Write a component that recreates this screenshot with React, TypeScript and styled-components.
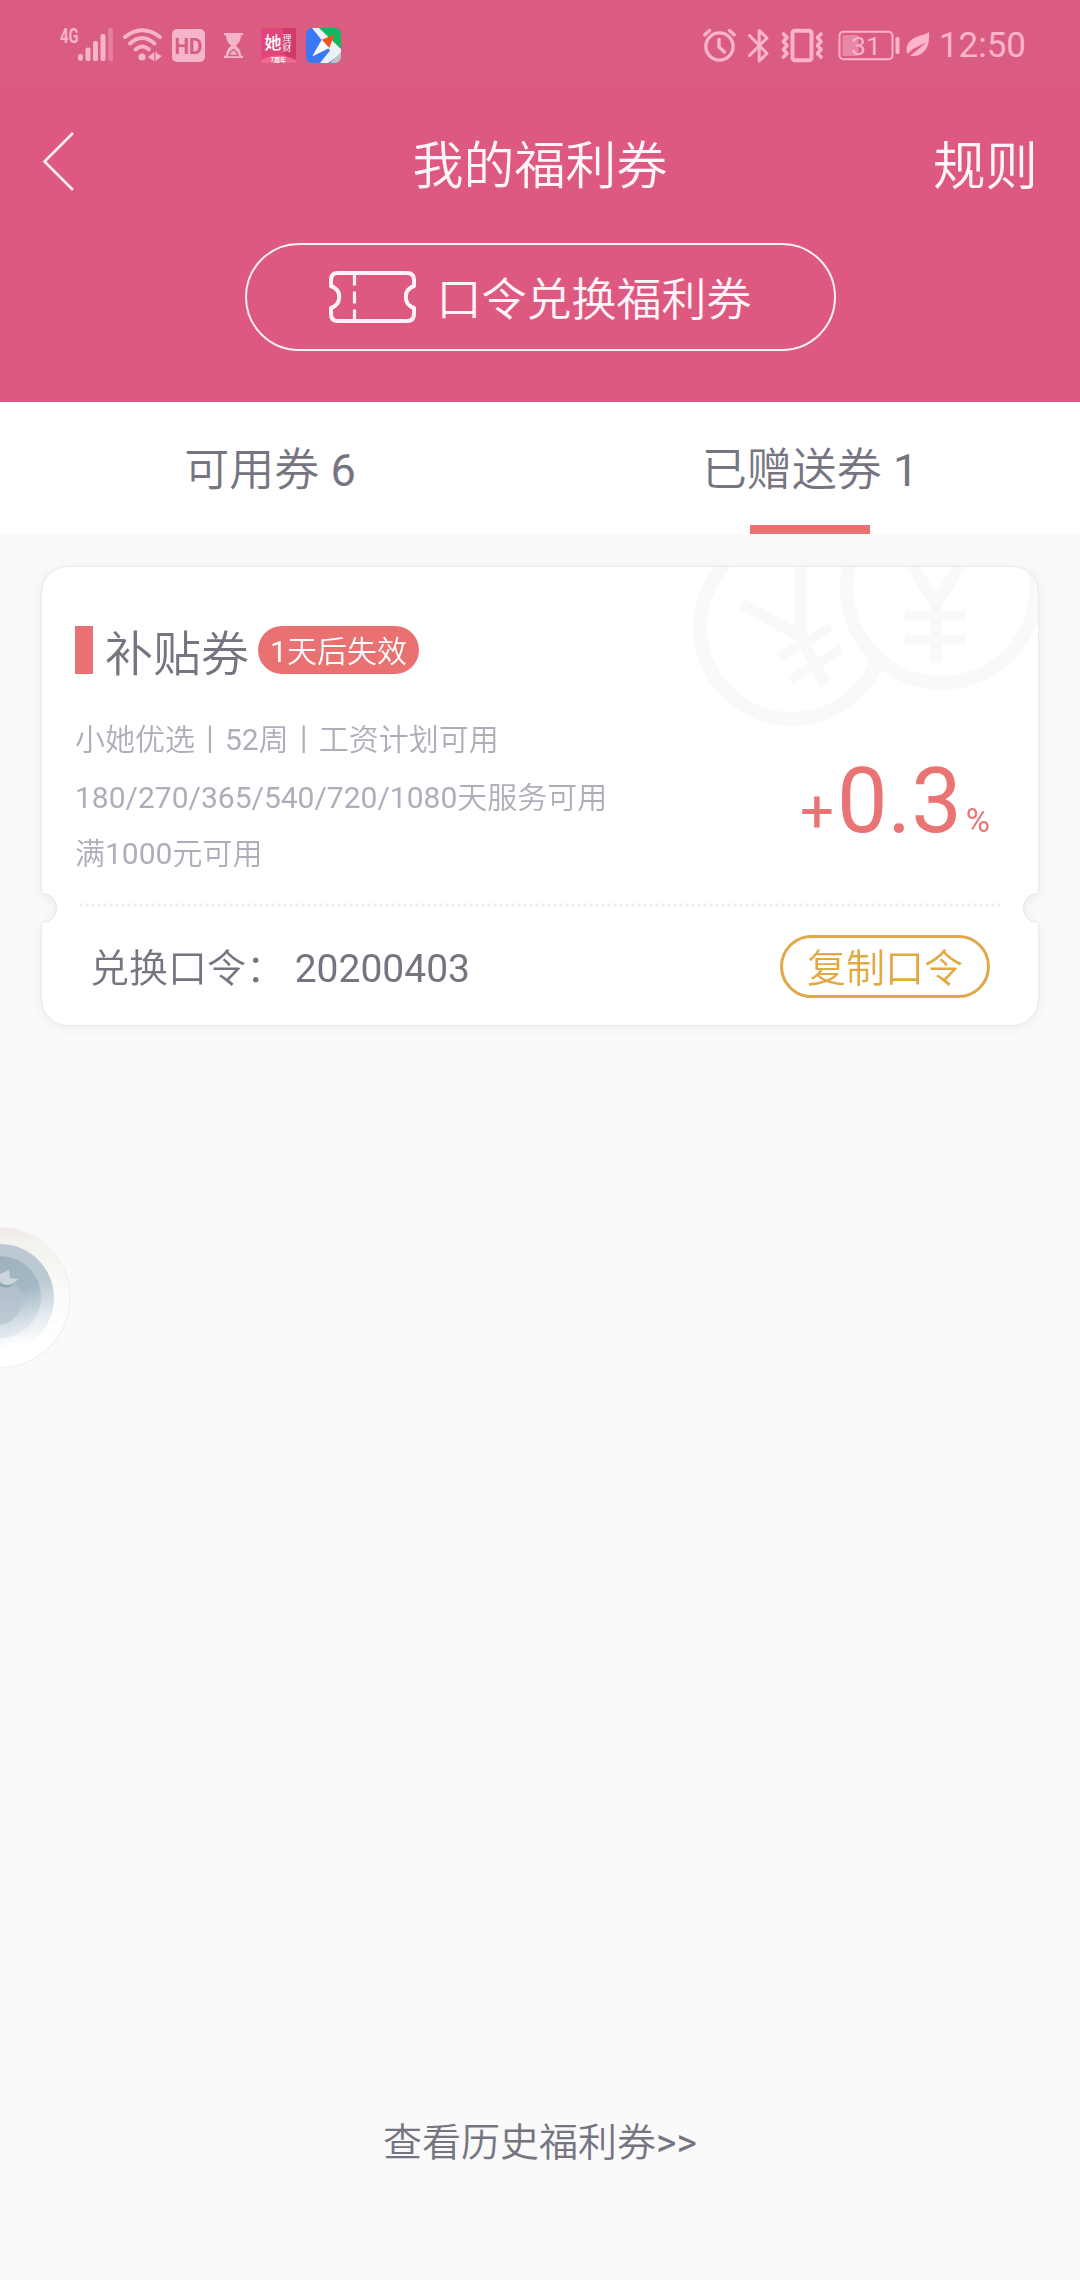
import React from 'react';
import styled, { createGlobalStyle } from 'styled-components';

const GlobalStyle = createGlobalStyle`
  * { box-sizing: border-box; }
  body {
    margin: 0;
    background: #fafafa;
    font-family: Roboto, "Noto Sans CJK SC", sans-serif;
    font-weight: 350;
    color: #757582;
  }
  button { font: inherit; color: inherit; background: none; border: 0; padding: 0; }
  svg { display: block; flex: none; }
`;

const Screen = styled.div`
  width: 1080px;
  height: 2280px;
  display: flex;
  flex-direction: column;
  position: relative;
  overflow: hidden;
  background: #fafafa;
`;

const StatusBar = styled.div`
  height: 90px;
  padding: 0 54px 0 58px;
  display: flex;
  align-items: flex-start;
  justify-content: space-between;
  background: #da5d81;
`;

const Clock = styled.span`
  margin: 25px 0 0 8px;
  font-size: 35px;
  line-height: 42px;
  font-weight: 400;
  color: #fdb3cb;
`;

const StatusRight = styled.div`
  display: flex;
`;

const Header = styled.header`
  height: 312px;
  padding-top: 4px;
  background: #de5980;
  color: #fff5fa;
`;

const NavRow = styled.div`
  height: 149px;
  padding: 0 42px;
  display: grid;
  grid-template-columns: 1fr auto 1fr;
  align-items: start;
`;

const BackButton = styled.button`
  margin-top: 36px;
  justify-self: start;
`;

const Title = styled.h1`
  margin: 41px 0 0;
  font-size: 51px;
  line-height: 64px;
  font-weight: 350;
`;

const RulesLink = styled.button`
  margin-top: 40px;
  justify-self: end;
  font-size: 52.5px;
  line-height: 66px;
`;

const RedeemButton = styled.button`
  width: 591px;
  height: 108px;
  margin: 0 auto;
  padding: 0 0 0 81px;
  display: flex;
  align-items: center;
  border: 2px solid #fff0f6;
  border-radius: 54px;
`;

const RedeemLabel = styled.span`
  margin: 7px 0 0 21px;
  font-size: 45px;
  line-height: 54px;
`;

const Tabs = styled.nav`
  height: 132px;
  display: grid;
  grid-template-columns: 1fr 1fr;
  background: #fff;
`;

const Tab = styled.button<{ $active?: boolean }>`
  display: flex;
  flex-direction: column;
  align-items: center;
  justify-content: space-between;
  padding-top: 39px;
  font-size: 45px;
  line-height: 60px;
  &::after {
    content: "";
    width: 120px;
    height: 9px;
    background: ${p => (p.$active ? '#ea7171' : 'transparent')};
  }
`;

const Latin = styled.span`
  font-weight: 400;
`;

const Content = styled.main`
  flex: 1;
  display: flex;
  flex-direction: column;
  padding: 33px 42px 0;
`;

const CardShadow = styled.div`
  filter: drop-shadow(0 0 1px rgba(0, 0, 0, 0.13)) drop-shadow(0 2px 7px rgba(0, 0, 0, 0.055));
`;

const Card = styled.article`
  height: 458px;
  position: relative;
  border-radius: 25px;
  background: #fff;
  overflow: hidden;
  mask-image: radial-gradient(circle at 0 341px, transparent 14.5px, #000 15.5px),
    radial-gradient(circle at 100% 341px, transparent 14.5px, #000 15.5px);
  mask-composite: intersect;
`;

const Watermark = styled.svg`
  position: absolute;
  right: 0;
  top: 0;
`;

const CardBody = styled.div`
  position: relative;
  height: 336px;
  padding: 59px 48px 0 33px;
`;

const CardHead = styled.div`
  display: flex;
  align-items: center;
  height: 48px;
`;

const Marker = styled.span`
  width: 18px;
  height: 48px;
  background: #ea7171;
`;

const CardTitle = styled.h2`
  margin: 9px 9px 0 12px;
  font-size: 48px;
  line-height: 48px;
  font-weight: 350;
`;

const Tag = styled.span`
  height: 48px;
  padding: 2px 12px 0;
  border-radius: 24px;
  background: #ea7171;
  color: #fff;
  font-size: 30px;
  line-height: 48px;
`;

const Details = styled.div`
  display: flex;
  justify-content: space-between;
`;

const Terms = styled.div`
  padding-top: 36px;
  font-size: 30px;
  color: #aeaeba;
`;

const Term = styled.p<{ $height: number }>`
  margin: 0;
  line-height: 60px;
  height: ${p => p.$height}px;
  white-space: nowrap;
`;

const Rate = styled.div`
  display: flex;
  align-items: baseline;
  padding-top: 75px;
  color: #ea7373;
  font-weight: 400;
`;

const RatePart = styled.span<{ $size: number; $gap?: number }>`
  font-size: ${p => p.$size}px;
  line-height: 106px;
  margin-left: ${p => p.$gap || 0}px;
`;

const Divider = styled.svg`
  margin-left: 36px;
`;

const CardFoot = styled.div`
  display: flex;
  align-items: flex-start;
  justify-content: space-between;
  padding: 28px 48px 0;
`;

const Code = styled.span`
  margin-top: 4px;
  font-size: 39px;
  line-height: 60px;
  white-space: pre;
`;

const CopyButton = styled.button`
  width: 210px;
  height: 63px;
  border: 3px solid #dfa848;
  border-radius: 32px;
  color: #e2a941;
  font-size: 39px;
  line-height: 63px;
`;

const HistoryLink = styled.button`
  margin: auto auto 107px;
  font-size: 39px;
  line-height: 60px;
`;

const FloatingOrb = styled.button`
  position: absolute;
  left: 0;
  top: 1225px;
`;

const StatusIconsLeft = () => (
  <svg width="290" height="90" viewBox="58 0 290 90">
    <g fill="#f4b5ca">
      <text x="60" y="42.500" fontFamily="Roboto" fontWeight="700" fontSize="20" textLength="18.500" lengthAdjust="spacingAndGlyphs">4G</text>
      <rect x="78" y="54" width="5" height="7" rx="2.400" />
      <rect x="85.500" y="47.500" width="5" height="13.500" rx="2" />
      <rect x="93" y="41" width="5" height="20" rx="2" />
      <rect x="100.500" y="34" width="5" height="27" rx="2" />
      <rect x="108.300" y="28" width="4.600" height="33" rx="1.500" opacity="0.400" />
      <circle cx="142" cy="57" r="3.600" />
      <path d="M148 57l6.200-5v9.200zM155.400 51.200v10l6.500-5.200-3.300-1.400z" />
      <rect x="172" y="29" width="33" height="33" rx="5" />
      <path d="M224 33h19v2.200h-2c0 5.500-2.600 8-5.200 10.500 2.800 2.300 5.200 5 5.200 10h2V58h-19v-2.300h2c0-5 2.400-7.700 5.200-10-2.600-2.500-5.200-5-5.200-10.500h-2z" />
    </g>
    <path d="M229 55.500c0-2 2-4 4.500-6 2.500 2 4.500 4 4.500 6z" fill="none" stroke="#da5d81" strokeWidth="1.500" />
    <g fill="none" stroke="#f4b5ca" strokeWidth="3.800" strokeLinecap="round">
      <path d="M125 37Q142.300 23.500 160 37M130 43.500Q142.300 32.500 154.500 43.500M135.500 49.500Q142.300 43.500 149 49.500" />
    </g>
    <text x="174.500" y="53.500" fontFamily="Roboto" fontWeight="700" fontSize="22" fill="#da5d81" textLength="28" lengthAdjust="spacingAndGlyphs">HD</text>
    <rect x="261" y="28" width="35" height="35" fill="#e2457b" />
    <path d="M283 28h13v35l-13-10z" fill="#cf3a6c" />
    <path d="M261 60Q278 51 296 60v3h-35z" fill="#f2668f" />
    <g fill="#fff" fontFamily="Noto Sans CJK SC">
      <text x="264.500" y="49" fontSize="17" fontWeight="500">她</text>
      <text x="282.500" y="42" fontSize="9">理</text>
      <text x="282.500" y="51" fontSize="9">财</text>
      <text x="270.500" y="62" fontSize="6" fontWeight="700">7周年</text>
    </g>
    <clipPath id="mapClip"><rect x="306" y="28" width="35" height="35" rx="6" /></clipPath>
    <g clipPath="url(#mapClip)">
      <rect x="306" y="28" width="35" height="35" fill="#3b78f8" />
      <path d="M318 28h23v24z" fill="#13b75c" />
      <path d="M312 28h7l22 21v5l-13 9h-8l10-12.500z" fill="#edf0f6" />
      <path d="M330 63l11-11v11z" fill="#bfc3c6" />
      <path d="M334.500 34.500l-12.800 5.200 7.500 8.300z" fill="#f4511e" />
      <path d="M321.700 39.700l7.500 8.300-17 8.500z" fill="#fff" />
    </g>
  </svg>
);

const StatusIconsRight = () => (
  <svg width="230" height="90" viewBox="701 0 230 90">
    <g fill="none" stroke="#fdb3cb" strokeWidth="3.400" strokeLinecap="round" strokeLinejoin="round">
      <circle cx="719.500" cy="46.500" r="13.600" />
      <path d="M719 39.500v7.500l5.500 5M704.800 34.800l4.800-4.300M734.200 34.800l-4.800-4.300" />
      <path d="M749.500 35.500L767 53.500l-7.800 7.500V30.500l7.800 7.500-17.500 17.500" strokeWidth="3" />
      <rect x="792.500" y="30.700" width="19" height="29.600" rx="2.500" strokeWidth="4" />
      <path d="M783.500 34l3.500 3.500-3.500 4 3.500 4-3.500 4 3.500 4-3.500 3.500M821 34l-3.500 3.500 3.500 4-3.500 4 3.500 4-3.500 4 3.500 3.500" strokeWidth="3.600" />
      <rect x="839.500" y="31.800" width="53" height="27.400" rx="4" strokeWidth="2" />
    </g>
    <rect x="842.500" y="35" width="16" height="21" rx="1.500" fill="#e887a7" />
    <rect x="895.500" y="37" width="4" height="17" rx="1.500" fill="#fdb3cb" />
    <text x="851" y="54.500" fontFamily="Roboto" fontWeight="400" fontSize="26.500" fill="#fdb3cb">31</text>
    <path d="M929 32c1 11-2 18-8 22-4 2.500-8 2-11 2l6-5 11-9-14 7-5.500 5c-3-7 1-14 9-17 5-2 8-2 12.500-5z" fill="#fdb3cb" />
  </svg>
);

const TicketIcon = () => (
  <svg width="88" height="56" viewBox="0 0 88 56" fill="none" stroke="#fff2f8" strokeWidth="4">
    <path d="M10 4h69q7 0 7 7v6c-11 4-11 18 0 22v6q0 7-7 7H10q-7 0-7-7v-6c11-4 11-18 0-22v-6q0-7 7-7z" strokeLinejoin="round" />
    <path d="M26.500 5v11.500M26.500 22.500v12M26.500 40.500v11" strokeWidth="3.200" />
  </svg>
);

const Orb = () => (
  <svg width="80" height="150" viewBox="0 1225 80 150">
    <defs>
      <linearGradient id="rim" x1="0" y1="0" x2="0" y2="1">
        <stop offset="0" stopColor="#f0e9ed" />
        <stop offset="0.120" stopColor="#f3f3ec" />
        <stop offset="0.500" stopColor="#fcfbfc" />
        <stop offset="0.800" stopColor="#ffffff" />
      </linearGradient>
      <linearGradient id="bowl" x1="0.500" y1="0" x2="0.650" y2="1">
        <stop offset="0" stopColor="#bcc8d3" />
        <stop offset="0.400" stopColor="#bccad3" />
        <stop offset="0.700" stopColor="#e3eaee" />
        <stop offset="0.950" stopColor="#ffffff" />
      </linearGradient>
      <linearGradient id="lens" x1="0.450" y1="0" x2="0.700" y2="1">
        <stop offset="0" stopColor="#9fb1be" />
        <stop offset="0.450" stopColor="#a3b8c4" />
        <stop offset="0.850" stopColor="#d8e2e8" />
        <stop offset="1" stopColor="#e6edf1" />
      </linearGradient>
      <linearGradient id="fruit" x1="0" y1="0" x2="0" y2="1">
        <stop offset="0" stopColor="#adbbc8" />
        <stop offset="1" stopColor="#bfcad5" />
      </linearGradient>
    </defs>
    <circle cx="0" cy="1297.500" r="70" fill="url(#rim)" stroke="#f5eff4" strokeWidth="1.500" />
    <circle cx="0" cy="1298" r="54" fill="url(#bowl)" />
    <circle cx="0" cy="1297" r="41" fill="url(#lens)" />
    <circle cx="-3" cy="1300" r="25" fill="url(#fruit)" />
    <path d="M-2 1283q10 8 18-4" fill="none" stroke="#8fa5b2" strokeWidth="2.500" />
    <path d="M0 1274l9-4 1 8 8 1q-5 6-10 6-5 0-8-4z" fill="#ccd6de" />
    <path d="M24 1335q9-6 14-15" fill="none" stroke="#eef3f6" strokeWidth="1.500" />
  </svg>
);

export default function App() {
  return (
    <Screen>
      <GlobalStyle />
      <StatusBar>
        <StatusIconsLeft />
        <StatusRight>
          <StatusIconsRight />
          <Clock>12:50</Clock>
        </StatusRight>
      </StatusBar>
      <Header>
        <NavRow>
          <BackButton aria-label="返回">
            <svg width="34" height="64" viewBox="0 0 34 64" fill="none" stroke="#fff0f6" strokeWidth="2.600">
              <path d="M31 3L2.500 31.500 31 60" />
            </svg>
          </BackButton>
          <Title>我的福利券</Title>
          <RulesLink>规则</RulesLink>
        </NavRow>
        <RedeemButton>
          <TicketIcon />
          <RedeemLabel>口令兑换福利券</RedeemLabel>
        </RedeemButton>
      </Header>
      <Tabs>
        <Tab><span>可用券<Latin> 6</Latin></span></Tab>
        <Tab $active><span>已赠送券<Latin> 1</Latin></span></Tab>
      </Tabs>
      <Content>
        <CardShadow>
          <Card>
            <Watermark width="360" height="170" viewBox="678 567 360 170" fill="none" stroke="#f9f9f9">
              <circle cx="792" cy="627" r="92" strokeWidth="14" />
              <path d="M741 603.500l61 33.500M801 567v70l24 47" strokeWidth="12" />
              <path d="M779 658l52-31M790 680l52-31" strokeWidth="9.500" />
              <circle cx="941.500" cy="588" r="95" fill="#fff" strokeWidth="14" />
              <path d="M909 560l27 44v59M963 560l-27 44" strokeWidth="12" />
              <path d="M905 615.500h61M905 639.500h61" strokeWidth="9.500" />
            </Watermark>
            <CardBody>
              <CardHead>
                <Marker />
                <CardTitle>补贴券</CardTitle>
                <Tag><Latin>1</Latin>天后失效</Tag>
              </CardHead>
              <Details>
                <Terms>
                  <Term $height={58}>小她优选丨<Latin>52</Latin>周丨工资计划可用</Term>
                  <Term $height={56}><Latin>180/270/365/540/720/1080</Latin>天服务可用</Term>
                  <Term $height={60}>满<Latin>1000</Latin>元可用</Term>
                </Terms>
                <Rate>
                  <RatePart $size={60}>+</RatePart>
                  <RatePart $size={90} $gap={3}>0.3</RatePart>
                  <RatePart $size={33} $gap={4}>%</RatePart>
                </Rate>
              </Details>
            </CardBody>
            <Divider width="924" height="4" viewBox="0 0 924 4">
              <path d="M1.500 2h922" stroke="#eeeeee" strokeWidth="3" strokeDasharray="3 3" />
            </Divider>
            <CardFoot>
              <Code>兑换口令：<Latin> 20200403</Latin></Code>
              <CopyButton>复制口令</CopyButton>
            </CardFoot>
          </Card>
        </CardShadow>
        <HistoryLink>查看历史福利券<Latin>&gt;&gt;</Latin></HistoryLink>
      </Content>
      <FloatingOrb aria-label="悬浮按钮"><Orb /></FloatingOrb>
    </Screen>
  );
}
